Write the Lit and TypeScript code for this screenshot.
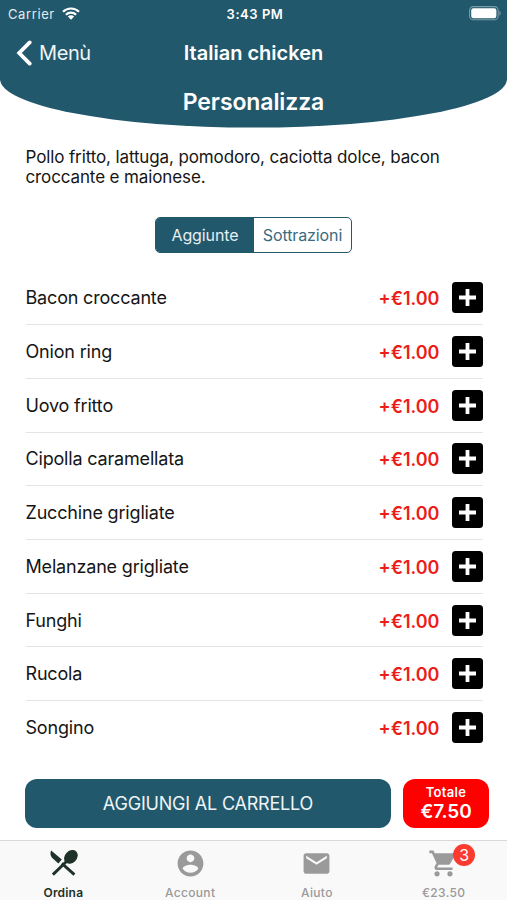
import { LitElement, html, css, svg } from "lit";
import { customElement, property, state } from "lit/decorators.js";
import { classMap } from "lit/directives/class-map.js";

const icons: Record<string, unknown> = {
  order: svg`<g transform="scale(.7742)">
    <path d="M3.2 2.6L13.8 11.6L10.4 15.6L4 9.8C2.2 7.8 2 4.8 3.2 2.6Z"/>
    <ellipse cx="22.9" cy="8.9" rx="7.6" ry="6" transform="rotate(-45 22.9 8.9)"/>
    <path fill="none" stroke="currentColor" stroke-width="2.9" d="M20 12L4.9 26.6M13.8 15.4L26.4 26.6"/>
  </g>`,
  account: svg`<path d="M12 2C6.48 2 2 6.48 2 12s4.48 10 10 10 10-4.48 10-10S17.52 2 12 2zm0 3c1.66 0 3 1.34 3 3s-1.34 3-3 3-3-1.34-3-3 1.34-3 3-3zm0 14.2c-2.5 0-4.71-1.28-6-3.22.03-1.99 4-3.08 6-3.08 1.99 0 5.97 1.09 6 3.08-1.29 1.94-3.5 3.22-6 3.22z"/>`,
  mail: svg`<path d="M20 4H4c-1.1 0-1.99.9-1.99 2L2 18c0 1.1.9 2 2 2h16c1.1 0 2-.9 2-2V6c0-1.1-.9-2-2-2zm0 4l-8 5-8-5V6l8 5 8-5v2z"/>`,
  cart: svg`
    <path d="M1 2V4H3L6.6 11.59L5.25 14.04C4.5 15.4 5.5 17 7 17H19V15H7.42C7.2 15 7.1 14.8 7.2 14.63L8.1 13H15.55C16.3 13 16.96 12.59 17.3 11.97L20.88 5.48C21.2 4.8 20.7 4 20 4H5.21L4.27 2Z"/>
    <circle cx="7" cy="20" r="2"/><circle cx="17" cy="20" r="2"/>`,
};

@customElement("page-header")
class PageHeader extends LitElement {
  static styles = css`
    :host { display: grid; height: 128px; color: #fff; }
    .shape, .content { grid-area: 1 / 1; }
    .shape { display: block; width: 100%; height: 128px; }
    .content { display: flex; flex-direction: column; }
    .status, .nav { display: grid; grid-template-columns: 1fr auto 1fr; align-items: center; }
    .status { height: 27px; font-size: 13px; padding: 0 5px 0 8px; }
    .carrier { display: flex; align-items: center; gap: 7px; letter-spacing: 0.6px; color: #e2ebee; }
    .time { font-weight: 600; letter-spacing: 0.55px; }
    .battery { justify-self: end; }
    .nav { height: 51px; padding: 0 16px; }
    .back { display: flex; align-items: center; gap: 7px; font-size: 20px; letter-spacing: -0.4px; color: #f0f5f6; }
    .title { font-size: 20px; font-weight: 600; letter-spacing: 0; }
    .subtitle { text-align: center; font-size: 23px; line-height: 28px; margin-top: 10px; font-weight: 600; letter-spacing: -0.1px; }
    svg { display: block; }
  `;
  render() {
    return html`
      <svg class="shape" viewBox="0 0 507 128" preserveAspectRatio="none">
        <path fill="#22586c" d="M0 0H507V79A253.5 48.6 0 0 1 0 79Z" />
      </svg>
      <div class="content">
        <div class="status">
          <div class="carrier">
            <span>Carrier</span>
            <svg width="18" height="13" viewBox="0 0 18 13" fill="none" stroke="#fff" stroke-width="2.2">
              <path d="M1 4.8a11.4 11.4 0 0 1 16 0M3.9 7.8a7.2 7.2 0 0 1 10.2 0" />
              <path fill="#fff" stroke="none" d="M9 12.7L5.8 9.6a4.6 4.6 0 0 1 6.4 0z" />
            </svg>
          </div>
          <span class="time">3:43 PM</span>
          <svg class="battery" width="33" height="15" viewBox="0 0 33 15">
            <rect x="0.6" y="0.6" width="28.6" height="13.2" rx="3.8" fill="none" stroke="#7a9ba7" stroke-width="1.1" />
            <rect x="2.2" y="2.2" width="25.2" height="10" rx="2.2" fill="#fff" />
            <path d="M30.4 5v4.5c1.6-.6 1.6-3.9 0-4.5z" fill="#7a9ba7" />
          </svg>
        </div>
        <div class="nav">
          <div class="back">
            <svg width="16" height="26" viewBox="0 0 16 26" fill="none" stroke="#fff" stroke-width="3.8" stroke-linecap="round" stroke-linejoin="miter">
              <path d="M13.7 2.4L3.2 13L13.7 23.6" />
            </svg>
            <span>Menù</span>
          </div>
          <span class="title">Italian chicken</span>
        </div>
        <div class="subtitle">Personalizza</div>
      </div>
    `;
  }
}

@customElement("extra-row")
class ExtraRow extends LitElement {
  @property() name = "";
  @property() price = "";
  static styles = css`
    :host { display: flex; align-items: center; height: 53.73px; box-sizing: border-box; border-bottom: 1px solid #e4e4e4; }
    :host(:last-of-type) { border-bottom-color: transparent; }
    .name { flex: 1; font-size: 18px; letter-spacing: -0.18px; color: #151515; }
    .price { font-size: 18px; font-weight: 600; color: #ee1c18; margin-right: 12.5px; padding-top: 2px; }
    svg { display: block; }
  `;
  render() {
    return html`
      <span class="name">${this.name}</span>
      <span class="price">${this.price}</span>
      <svg width="31" height="31" viewBox="0 0 31 31">
        <rect width="31" height="31" rx="3.5" fill="#000" />
        <path d="M15.5 7V24M7 15.5H24" stroke="#fff" stroke-width="3.8" />
      </svg>
    `;
  }
}

@customElement("tab-item")
class TabItem extends LitElement {
  @property() icon = "";
  @property() label = "";
  @property() badge = "";
  @property({ type: Boolean }) active = false;
  static styles = css`
    .tab { display: flex; flex-direction: column; align-items: center; color: #9a9a9a; padding-top: 7px; }
    .active { color: #1f3229; }
    .icon { position: relative; height: 31px; }
    svg { display: block; fill: currentColor; }
    .label { font-size: 12px; line-height: 15px; margin-top: 6px; font-weight: 500; letter-spacing: 0.35px; }
    .active .label { font-weight: 600; letter-spacing: 0.2px; }
    .badge { position: absolute; left: 25px; top: -4px; width: 22px; height: 22px; border-radius: 50%; background: #fb3b30; color: #fff; font-size: 16px; line-height: 22px; text-align: center; }
  `;
  render() {
    return html`
      <div class=${classMap({ tab: true, active: this.active })}>
        <div class="icon">
          <svg width="31" height="31" viewBox="0 0 24 24">${icons[this.icon]}</svg>
          ${this.badge ? html`<span class="badge">${this.badge}</span>` : null}
        </div>
        <span class="label">${this.label}</span>
      </div>
    `;
  }
}

@customElement("app-root")
class AppRoot extends LitElement {
  @state() private segment = 0;

  private extras = [
    "Bacon croccante", "Onion ring", "Uovo fritto", "Cipolla caramellata", "Zucchine grigliate",
    "Melanzane grigliate", "Funghi", "Rucola", "Songino",
  ];

  static styles = css`
    :host { display: flex; flex-direction: column; height: 900px; overflow: hidden; background: #fff; font-family: Inter, "Liberation Sans", sans-serif; }
    .description { margin: 19px 40px 0 25.5px; font-size: 17px; line-height: 20px; letter-spacing: -0.12px; color: #151515; }
    .segments { display: flex; align-self: center; width: 197px; height: 36px; margin: 30px 0 0 0.5px; box-sizing: border-box; border: 1.5px solid #22586c; border-radius: 5px; overflow: hidden; }
    .segment { flex: 1; display: flex; align-items: center; justify-content: center; font-size: 16px; letter-spacing: -0.1px; color: #3a6b7e; cursor: pointer; }
    .selected { background: #22586c; color: #e6eff2; }
    .list { margin: 18.4px 24px 0 25.5px; }
    .actions { display: flex; gap: 12px; margin: 24px 18px 0 25px; height: 49px; }
    .add { flex: 1; display: flex; align-items: center; justify-content: center; border-radius: 12px; background: #22586c; color: #edf4f6; font-size: 18px; letter-spacing: -0.2px; }
    .total { width: 86px; border-radius: 12px; background: #fe0000; color: #fff; display: flex; flex-direction: column; align-items: center; font-weight: 600; }
    .caption { font-size: 13px; line-height: 16px; margin-top: 5px; letter-spacing: 0.3px; }
    .amount { font-size: 19px; line-height: 24px; letter-spacing: -0.15px; margin-top: 0.5px; }
    .tabs { margin-top: auto; height: 60px; box-sizing: border-box; border-top: 1px solid #d9d9d9; background: #f9f9f9; display: grid; grid-template-columns: repeat(4, 1fr); }
  `;

  render() {
    return html`
      <page-header></page-header>
      <div class="description">Pollo fritto, lattuga, pomodoro, caciotta dolce, bacon<br />croccante e maionese.</div>
      <div class="segments">
        ${["Aggiunte", "Sottrazioni"].map((label, i) => html`
          <div class=${classMap({ segment: true, selected: this.segment === i })} @click=${() => (this.segment = i)}>
            <span>${label}</span>
          </div>`)}
      </div>
      <div class="list">
        ${this.extras.map((name) => html`<extra-row name=${name} price="+€1.00"></extra-row>`)}
      </div>
      <div class="actions">
        <div class="add">AGGIUNGI AL CARRELLO</div>
        <div class="total"><span class="caption">Totale</span><span class="amount">€7.50</span></div>
      </div>
      <div class="tabs">
        <tab-item icon="order" label="Ordina" active></tab-item>
        <tab-item icon="account" label="Account"></tab-item>
        <tab-item icon="mail" label="Aiuto"></tab-item>
        <tab-item icon="cart" label="€23.50" badge="3"></tab-item>
      </div>
    `;
  }
}
